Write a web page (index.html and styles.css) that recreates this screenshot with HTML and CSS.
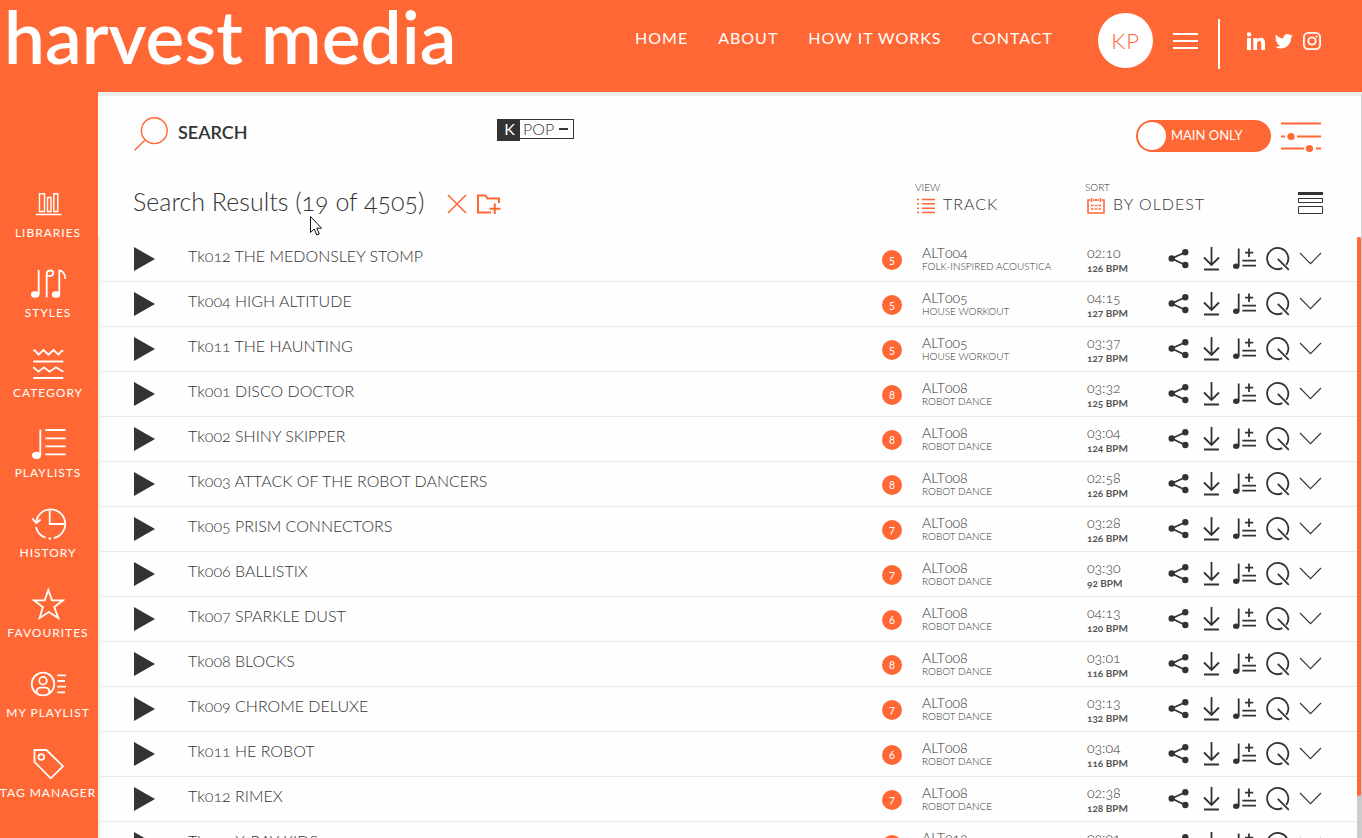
FILE: index.html
```html
<!DOCTYPE html>
<html lang="en">

<head>
    <meta charset="utf-8" />
    <title>Harvest Media</title>
    <link rel="stylesheet" href="styles.css">
</head>

<body>
    <!-- shared icons for the track rows -->
    <svg class="sprite" aria-hidden="true">
        <symbol id="i-play" viewBox="0 0 21 24"><path d="M0 0L21 12L0 24Z" fill="currentColor" /></symbol>
        <symbol id="i-share" viewBox="0 0 24 24">
            <path d="M18.3 5.2L4.7 11.5L18.3 18" />
            <circle cx="4.7" cy="11.5" r="3.2" fill="currentColor" stroke="none" />
            <circle cx="18.3" cy="5.2" r="3.2" fill="currentColor" stroke="none" />
            <circle cx="18.3" cy="18" r="3.2" fill="currentColor" stroke="none" />
        </symbol>
        <symbol id="i-download" viewBox="0 0 24 24"><path d="M11.5 0V17.5M4 10.5L11.5 18L19 10.5M4 22.5H19" /></symbol>
        <symbol id="i-add" viewBox="0 0 24 24">
            <path d="M5.7 1.5V19M16 1.5V10M12 5.7H20.2M9.3 13.7H23M9.3 18.7H23" />
            <ellipse cx="3.2" cy="19.2" rx="3.2" ry="2.7" fill="currentColor" stroke="none" />
        </symbol>
        <symbol id="i-similar" viewBox="0 0 24 24"><path d="M16.3 21.1A10.6 10.6 0 1 1 20.2 17.9M11.8 11.8L22.8 22.8" /></symbol>
        <symbol id="i-more" viewBox="0 0 24 24"><path d="M1 6L11.5 16.7L22 6" stroke-width="1.1" /></symbol>
    </svg>

    <header class="header">
        <a class="logo" href="#">harvest media</a>
        <nav class="nav">
            <a href="#">HOME</a>
            <a href="#">ABOUT</a>
            <a href="#">HOW IT WORKS</a>
            <a href="#">CONTACT</a>
        </nav>
        <a class="avatar" href="#">KP</a>
        <button class="burger" aria-label="Menu"><span></span><span></span><span></span></button>
        <div class="social">
            <a href="#" aria-label="LinkedIn">
                <svg viewBox="0 0 18 18"><path fill="currentColor" stroke="none" d="M0 6H4V18H0ZM6.3 6H10V7.7C10.8 6.4 12 5.7 13.6 5.7C16.8 5.7 18 7.7 18 11V18H14.2V11.8C14.2 10 13.7 9 12.4 9C10.9 9 10.1 10.1 10.1 11.9V18H6.3Z" /><circle cx="2" cy="2.4" r="2.2" fill="currentColor" stroke="none" /></svg>
            </a>
            <a href="#" aria-label="Twitter">
                <svg viewBox="0 0 24 24"><path fill="currentColor" stroke="none" d="M23.6 4.9c-.9.4-1.8.7-2.8.8 1-.6 1.8-1.6 2.1-2.7-.9.6-2 1-3.1 1.2A4.9 4.9 0 0 0 11.5 8.6 13.9 13.9 0 0 1 1.4 3.5a4.9 4.9 0 0 0 1.5 6.5c-.8 0-1.6-.2-2.2-.6v.1c0 2.3 1.7 4.3 3.9 4.8-.7.2-1.5.2-2.2.1.6 2 2.4 3.4 4.6 3.4A9.9 9.9 0 0 1 0 19.8a13.900 13.900 0 0 0 7.500 2.200c9.100 0 14-7.500 14-14v-.6c1-.7 1.800-1.600 2.100-2.500z" /></svg>
            </a>
            <a href="#" aria-label="Instagram">
                <svg viewBox="0 0 18 18" stroke-width="1.8"><rect x="0.9" y="0.9" width="16.2" height="16.2" rx="4.5" /><circle cx="9" cy="9" r="3.7" /><circle cx="13.6" cy="4.4" r="1" fill="currentColor" stroke="none" /></svg>
            </a>
        </div>
    </header>

    <div class="wrap">
        <nav class="sidebar">
            <a href="#">
                <svg viewBox="0 0 36 36"><path d="M5.7 28.5H31.7M9.5 7.8H14.5V25.5H9.5ZM17.5 11.5H21V25.5H17.5ZM23.8 7.8H27.8V25.5H23.8Z" stroke-width="1.4" /></svg>
                LIBRARIES
            </a>
            <a href="#">
                <svg viewBox="0 0 36 36"><path d="M8.7 4V28M16.7 31.5V8C16.7 5.5 18.5 4.5 20.5 4.5C22.5 4.5 23.5 6 23.2 7.5C22.8 10 19.5 10.8 17.2 9.5M29.3 28V4.5C31.5 4.5 35.5 7 35.2 13" /><ellipse class="solid" cx="5.2" cy="28.5" rx="4.2" ry="3.2" /><ellipse class="solid" cx="26" cy="28.5" rx="4.2" ry="3.2" /></svg>
                STYLES
            </a>
            <a href="#">
                <svg viewBox="0 0 36 36"><path d="M3.3 4.5H5L8.5 8.7L13.5 4L18.5 8.7L23.5 4L28.5 8.7L31.5 4.8H33.3M3.3 15.5H33.3M3.3 21.3L8.5 25.7L14 21.3L19.5 25.7L26 21.3L33.3 25.7M3.3 32H33.3" /></svg>
                CATEGORY
            </a>
            <a href="#">
                <svg viewBox="0 0 36 36"><path d="M10.3 3.5V29M15.3 4H35.7M15.3 12.3H35.7M15.3 20.3H35.7M15.3 28.3H35.7" /><ellipse class="solid" cx="6.5" cy="29.3" rx="4.5" ry="3.6" /></svg>
                PLAYLISTS
            </a>
            <a href="#">
                <svg viewBox="0 0 36 36"><path d="M6.3 16A14.5 14.5 0 1 1 24 32M21 32.5H18.5M15.5 31.7A14.5 14.5 0 0 1 6 21M19.7 4V18H34M2.3 12.3L6.3 17L10.7 13.5" /></svg>
                HISTORY
            </a>
            <a href="#">
                <svg viewBox="0 0 36 36"><path d="M18.3 4L22 14.3H33L24.3 21L28.3 32L18.8 26L9.7 32L12.8 21L4 14.3H14.7Z" /></svg>
                FAVOURITES
            </a>
            <a href="#">
                <svg viewBox="0 0 36 36"><circle cx="13" cy="18" r="11.3" /><circle cx="13" cy="14.7" r="3.8" /><path d="M6.5 27C6.5 23 8 21.7 10.5 21.7H15.5C18 21.7 19.5 23 19.5 27M27.3 9.3H36M27.3 15H35M27.3 20.7H36M27.3 26.3H35" /></svg>
                MY PLAYLIST
            </a>
            <a href="#">
                <svg viewBox="0 0 36 36"><path d="M4.5 4H16.5L33 20.3L20.7 32.3L4.5 16Z" /><circle cx="11.3" cy="11" r="2.9" /></svg>
                TAG MANAGER
            </a>
        </nav>

        <main class="panel">
            <div class="searchbar">
                <label class="search">
                    <svg viewBox="0 0 34 34"><circle cx="20.3" cy="13.7" r="12.9" /><path d="M11 23L0.5 33.5" /></svg>
                    <input type="text" placeholder="SEARCH" aria-label="Search">
                </label>
                <div class="chip">
                    <span class="chip-key">K</span>
                    <span class="chip-text">POP <button aria-label="Remove"></button></span>
                </div>
                <label class="toggle"><input type="checkbox"><span>MAIN ONLY</span></label>
                <button class="filters" aria-label="Filters">
                    <svg viewBox="0 0 40 32"><path d="M0 2.5H40M0 15.5H4M16 15.5H40M0 27.5H23M35 27.5H40" /><circle cx="10" cy="15.5" r="3.6" /><circle cx="28.5" cy="27.5" r="3.6" /></svg>
                </button>
            </div>

            <div class="toolbar">
                <div class="results">
                    <h1>Search Results (19 of 4505)</h1>
                    <button aria-label="Clear"><svg viewBox="0 0 20 20"><path d="M1 1L19 19M19 1L1 19" /></svg></button>
                    <button class="folder" aria-label="Save to folder"><svg viewBox="0 0 24 20"><path d="M14 18.5H1V1.5H8.5L10.5 4.5H22V9M17.8 9.5V20M12.5 14.8H23.5" stroke-width="2" /></svg></button>
                </div>
                <div class="option">
                    <label for="view">VIEW</label>
                    <div class="option-value">
                        <svg viewBox="0 0 18 16"><path d="M0 1.5H2M5 1.5H18M0 5.8H2M5 5.8H18M0 10.2H2M5 10.2H18M0 14.5H2M5 14.5H18" /></svg>
                        <select id="view"><option>TRACK</option></select>
                    </div>
                </div>
                <div class="option">
                    <label for="sort">SORT</label>
                    <div class="option-value">
                        <svg viewBox="0 0 18 16"><path d="M3 2H1V15H17V2H15M6 2H12M4.5 0V4M13.5 0V4M4 7.5H6.5M7.8 7.5H10.3M11.5 7.5H14M4 11H6.5M7.8 11H10.3M11.5 11H14" /></svg>
                        <select id="sort"><option>BY OLDEST</option></select>
                    </div>
                </div>
                <button class="density" aria-label="Row size"><svg viewBox="0 0 25 22"><path d="M0 0H25V3H0Z" fill="currentColor" stroke="none" /><path d="M0.5 6.5H24.5V10.5H0.5ZM0.5 14.5H24.5V21.5H0.5Z" /></svg></button>
                <svg class="cursor" viewBox="0 0 12 20"><path d="M0.5 0.5V16.5L4.2 13L6.8 19L9.3 18L6.8 12.2H11.5Z" fill="#fff" stroke="#111" /></svg>
            </div>

            <div class="list">
                <table class="tracks">
                    <colgroup>
                        <col class="c-play"><col><col class="c-count"><col class="c-album"><col class="c-time"><col class="c-actions">
                    </colgroup>
                    <tbody id="tracks"></tbody>
                </table>
                <div class="scrollbar"><div class="thumb"></div></div>
            </div>
        </main>
    </div>
    <script src="script.js"></script>
</body>

</html>
```

FILE: styles.css
```css
* {
    box-sizing: border-box;
    margin: 0;
    padding: 0;
}

body {
    display: flex;
    flex-direction: column;
    height: 100vh;
    overflow: hidden;
    background: #ff6835;
    color: #333;
    font-family: Lato, "Open Sans", sans-serif;
    font-size: 16px;
    font-weight: 300;
    font-variant-numeric: oldstyle-nums;
}

a {
    color: inherit;
    text-decoration: none;
}

button,
input,
select {
    border: none;
    background: none;
    color: inherit;
    font: inherit;
    appearance: none;
}

svg {
    display: block;
    fill: none;
    stroke: currentColor;
}

.sprite {
    position: absolute;
    width: 0;
    height: 0;
}

/* header */
.header {
    display: flex;
    align-items: flex-start;
    height: 92px;
    padding: 0 41px 0 4px;
    color: #fff;
}

.logo {
    margin-right: auto;
    font-size: 73px;
    font-weight: 600;
    line-height: 72px;
    white-space: nowrap;
}

.nav {
    display: flex;
    gap: 30px;
    margin-right: 45px;
    font-weight: 400;
    line-height: 76px;
    letter-spacing: 1px;
    white-space: nowrap;
}

.avatar {
    width: 55px;
    height: 55px;
    margin-top: 13px;
    border-radius: 50%;
    background: #fff;
    color: #ff6835;
    font-size: 22px;
    line-height: 56px;
    letter-spacing: 1px;
    text-align: center;
}

.burger {
    display: flex;
    flex-direction: column;
    gap: 5px;
    width: 25px;
    margin: 33px 20px 0;
}

.burger span {
    height: 2px;
    background: #fff;
}

.social {
    display: flex;
    gap: 10px;
    height: 50px;
    margin-top: 19px;
    padding: 13px 0 0 27px;
    border-left: 2px solid #fff;
}

.social svg {
    width: 18px;
    height: 18px;
}

/* left menu */
.wrap {
    display: flex;
    flex: 1;
    min-height: 0;
}

.sidebar {
    display: flex;
    flex-direction: column;
    gap: 22px;
    width: 98px;
    padding: 94px 2px 0 0;
    color: #fff;
    font-size: 12px;
    font-weight: 400;
    line-height: 22px;
    letter-spacing: 1px;
    white-space: nowrap;
}

.sidebar a {
    display: flex;
    flex-direction: column;
    align-items: center;
}

.sidebar svg {
    width: 36px;
    height: 36px;
    overflow: visible;
    stroke-width: 1.8;
}

.sidebar .solid {
    fill: currentColor;
    stroke: none;
}

/* main panel */
.panel {
    display: flex;
    flex: 1;
    flex-direction: column;
    min-width: 0;
    border-top: 4px solid #ededed;
    border-right: 1px solid #ccc;
    background: #fefefe;
}

.searchbar {
    display: flex;
    align-items: flex-start;
    height: 76px;
    padding: 21px 40px 0 36px;
}

.search {
    display: flex;
    gap: 10px;
    width: 363px;
}

.search svg {
    width: 34px;
    height: 34px;
    color: #ff6835;
    stroke-width: 1.4;
}

.search input {
    width: 240px;
    height: 30px;
    font-size: 18px;
    font-weight: 600;
}

.search input::placeholder {
    color: #333;
    opacity: 1;
}

.chip {
    display: flex;
    align-items: flex-start;
    margin-top: 2px;
    margin-right: auto;
    line-height: 20px;
}

.chip-key {
    width: 23px;
    height: 22px;
    padding-left: 2px;
    background: #333;
    color: #fff;
    font-weight: 400;
    text-align: center;
}

.chip-text {
    display: flex;
    align-items: center;
    gap: 5px;
    height: 20px;
    padding: 0 5px 0 3px;
    border: 1px solid #333;
    border-left: none;
}

.chip button {
    width: 9px;
    height: 2px;
    background: #333;
}

.toggle {
    display: flex;
    gap: 5px;
    width: 135px;
    height: 32px;
    margin: 3px 10px 0 0;
    padding: 2px;
    border-radius: 16px;
    background: #ff6835;
    color: #fff;
    font-size: 13px;
    font-weight: 400;
    line-height: 26px;
}

.toggle input {
    width: 28px;
    height: 28px;
    border-radius: 50%;
    background: #fff;
}

.filters {
    width: 40px;
    height: 32px;
    margin-top: 4px;
    color: #ff6835;
}

.filters svg {
    stroke-width: 2;
}

.filters circle {
    fill: currentColor;
    stroke: none;
}

.toolbar {
    position: relative;
    display: flex;
    align-items: flex-start;
    height: 65px;
    padding: 8px 38px 0 35px;
}

.results {
    display: flex;
    flex: 1;
    gap: 10px;
    align-items: flex-start;
    padding-top: 14px;
    color: #ff6835;
}

.results h1 {
    margin-right: 13px;
    color: #333;
    font-size: 25px;
    font-weight: 300;
    line-height: 14px;
}

.results button {
    width: 20px;
    height: 20px;
}

.results svg {
    height: 20px;
    stroke-width: 1.6;
}

.results .folder {
    width: 24px;
}

.option {
    width: 170px;
}

.option label {
    display: block;
    font-size: 10px;
    line-height: 14px;
}

.option-value {
    display: flex;
    align-items: center;
    gap: 8px;
    padding-left: 2px;
}

.option svg {
    width: 18px;
    height: 16px;
    margin-top: 3px;
    color: #ff6835;
    stroke-width: 1.6;
}

.option select {
    line-height: 20px;
    letter-spacing: 1px;
}

.density {
    width: 25px;
    height: 22px;
    margin: 12px 0 0 43px;
}

.cursor {
    position: absolute;
    top: 44px;
    left: 212px;
    width: 12px;
    height: 20px;
}

/* track list */
.list {
    display: flex;
    flex: 1;
    min-height: 0;
    overflow: hidden;
    border-left: 2px solid #ededed;
}

.tracks {
    flex: 1;
    align-self: flex-start;
    border-spacing: 0;
    table-layout: fixed;
}

.c-play {
    width: 88px;
}

.c-count {
    width: 40px;
}

.c-album {
    width: 165px;
}

.c-time {
    width: 80px;
}

.c-actions {
    width: 190px;
}

.tracks td {
    height: 45px;
    border-bottom: 1px solid #ebebeb;
    vertical-align: middle;
    white-space: nowrap;
}

.play {
    display: block;
    width: 21px;
    height: 24px;
    margin-left: 34px;
}

.play svg {
    width: 21px;
    height: 24px;
    stroke: none;
}

.tracks .name {
    padding-bottom: 8px;
}

.tracks .time {
    padding-top: 3px;
}

.count {
    display: block;
    width: 20px;
    height: 20px;
    margin-top: 2px;
    border-radius: 50%;
    background: #ff6835;
    color: #fff;
    font-size: 11px;
    font-weight: 400;
    line-height: 20px;
    text-align: center;
}

.code,
.length {
    font-size: 14px;
    line-height: 14px;
}

.album {
    font-size: 10px;
    line-height: 12px;
}

.bpm {
    font-size: 10px;
    font-weight: 700;
    line-height: 16px;
    color: #555;
}

.actions {
    display: flex;
    gap: 9px;
}

.actions button,
.actions svg {
    width: 24px;
    height: 24px;
    stroke-width: 1.8;
}

.scrollbar {
    width: 4px;
    background: #ccc;
}

.thumb {
    height: 93%;
    border-radius: 2px;
    background: #ff6835;
}
```

FILE: script.js
```js
// name, count, album code, album, length, bpm
var tracks = [
    ["Tk012 THE MEDONSLEY STOMP", 5, "ALT004", "FOLK-INSPIRED ACOUSTICA", "02:10", 126],
    ["Tk004 HIGH ALTITUDE", 5, "ALT005", "HOUSE WORKOUT", "04:15", 127],
    ["Tk011 THE HAUNTING", 5, "ALT005", "HOUSE WORKOUT", "03:37", 127],
    ["Tk001 DISCO DOCTOR", 8, "ALT008", "ROBOT DANCE", "03:32", 125],
    ["Tk002 SHINY SKIPPER", 8, "ALT008", "ROBOT DANCE", "03:04", 124],
    ["Tk003 ATTACK OF THE ROBOT DANCERS", 8, "ALT008", "ROBOT DANCE", "02:58", 126],
    ["Tk005 PRISM CONNECTORS", 7, "ALT008", "ROBOT DANCE", "03:28", 126],
    ["Tk006 BALLISTIX", 7, "ALT008", "ROBOT DANCE", "03:30", 92],
    ["Tk007 SPARKLE DUST", 6, "ALT008", "ROBOT DANCE", "04:13", 120],
    ["Tk008 BLOCKS", 8, "ALT008", "ROBOT DANCE", "03:01", 116],
    ["Tk009 CHROME DELUXE", 7, "ALT008", "ROBOT DANCE", "03:13", 132],
    ["Tk011 HE ROBOT", 6, "ALT008", "ROBOT DANCE", "03:04", 116],
    ["Tk012 RIMEX", 7, "ALT008", "ROBOT DANCE", "02:38", 128],
    ["Tk001 X-RAY KIDS", 6, "ALT012", "ELECTRO", "03:01", 128]
];
var actions = ["share", "download", "add", "similar", "more"];

function iconButton(name, cls) {
    return '<button class="' + cls + '" aria-label="' + name + '"><svg><use href="#i-' + name + '"></use></svg></button>';
}

var html = "";
for (var i = 0; i < tracks.length; i++) {
    var t = tracks[i];
    html += "<tr>" +
        "<td>" + iconButton("play", "play") + "</td>" +
        '<td class="name">' + t[0] + "</td>" +
        '<td><span class="count">' + t[1] + "</span></td>" +
        '<td><div class="code">' + t[2] + '</div><div class="album">' + t[3] + "</div></td>" +
        '<td class="time"><div class="length">' + t[4] + '</div><div class="bpm">' + t[5] + " BPM</div></td>" +
        '<td><div class="actions">';
    for (var j = 0; j < actions.length; j++) {
        html += iconButton(actions[j], "action");
    }
    html += "</div></td></tr>";
}
document.getElementById("tracks").innerHTML = html;
```
